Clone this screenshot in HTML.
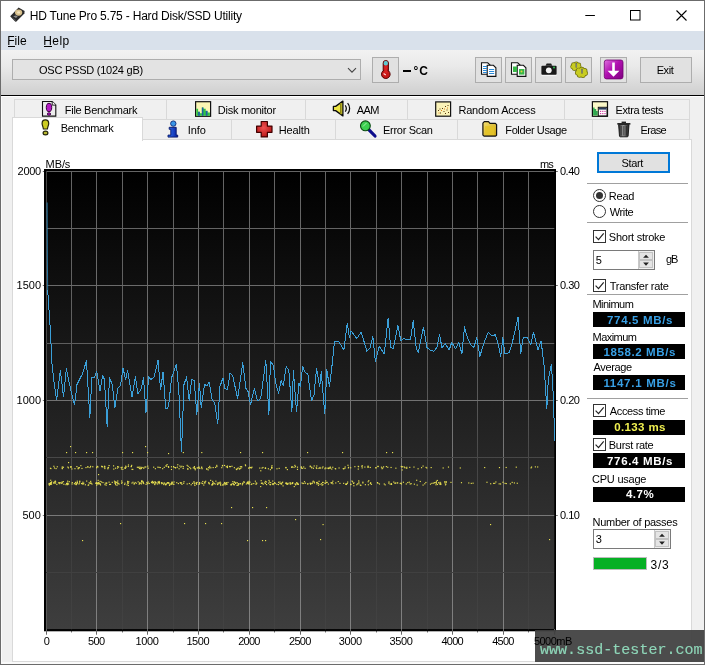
<!DOCTYPE html>
<html><head><meta charset="utf-8"><title>HD Tune Pro</title>
<style>
*{box-sizing:border-box;margin:0;padding:0}
html,body{width:705px;height:665px;overflow:hidden;background:#f0f0f0;font-family:"Liberation Sans",sans-serif}
#w{position:absolute;left:0;top:0;width:705px;height:665px;overflow:hidden;background:#f0f0f0}
.a{position:absolute}
.t{position:absolute;white-space:pre;line-height:1;display:block}
.tab{position:absolute;background:#f0f0f0;border:1px solid #d9d9d9}
.btn{position:absolute;background:#e1e1e1;border:1px solid #adadad}
.vb{position:absolute;background:#000;left:593px;width:92px;height:15px}
.sep{position:absolute;left:587px;width:101px;height:1px;background:#a0a0a0}
.cb{position:absolute;left:593px;width:13px;height:13px;border:1px solid #333;background:#fff}
.spin{position:absolute;background:#fff;border:1px solid #7a7a7a}
</style></head><body><div id="w">

<!-- title bar -->
<div class="a" style="left:0;top:0;width:705px;height:31px;background:#fff"></div>
<!-- menu bar -->
<div class="a" style="left:0;top:31px;width:705px;height:19px;background:#d9e1eb"></div>
<!-- toolbar gradient -->
<div class="a" style="left:0;top:50px;width:705px;height:45px;background:linear-gradient(#f2f2f2,#eaeaea 35%,#cfcfcf)"></div>
<div class="a" style="left:0;top:95px;width:705px;height:1px;background:#000"></div>
<div class="a" style="left:0;top:96px;width:705px;height:1px;background:#fff"></div>

<!-- window controls -->
<svg class="a" style="left:570px;top:0" width="135" height="31" viewBox="0 0 135 31">
<path d="M15.3 15.5h9.6" stroke="#000" stroke-width="1" fill="none"/>
<rect x="60.5" y="10.5" width="9.5" height="9.500" stroke="#000" stroke-width="1" fill="none"/>
<path d="M106.5 10.5l10 10M116.5 10.5l-10 10" stroke="#000" stroke-width="1.1" fill="none"/>
</svg>

<!-- app icon -->
<svg class="a" style="left:9px;top:6px" width="18" height="18" viewBox="0 0 18 18">
<path d="M1.2 10.2 L9.6 1.6 L15.6 5 L15.4 7.4 L7.4 15.6 L6.2 15.6 Z" fill="#2a2a2a"/>
<path d="M1.2 10.2 L6.2 13.6 L7.4 15.6 L6.2 15.6 Z" fill="#555"/>
<ellipse cx="9.6" cy="6.6" rx="3.6" ry="3.1" fill="#d8c08c"/>
<ellipse cx="9.6" cy="6.4" rx="1.5" ry="1.2" fill="#f3e4bd"/>
<path d="M4.2 10.2 L7 12 L8.8 10.4 L6.8 9.4 Z" fill="#8a8a8a"/>
</svg>

<!-- combobox -->
<div class="a" style="left:12px;top:59px;width:349px;height:21px;background:#e3e3e3;border:1px solid #adadad"></div>
<svg class="a" style="left:345px;top:65px" width="14" height="10" viewBox="0 0 14 10"><path d="M3 3.2l4 4 4-4" stroke="#444" stroke-width="1.1" fill="none"/></svg>

<!-- toolbar buttons -->
<div class="btn" style="left:372px;top:57px;width:27px;height:26px"></div>
<div class="btn" style="left:475px;top:57px;width:27px;height:26px"></div>
<div class="btn" style="left:505px;top:57px;width:27px;height:26px"></div>
<div class="btn" style="left:535px;top:57px;width:27px;height:26px"></div>
<div class="btn" style="left:565px;top:57px;width:27px;height:26px"></div>
<div class="btn" style="left:600px;top:57px;width:27px;height:26px"></div>
<div class="btn" style="left:640px;top:57px;width:52px;height:26px"></div>
<!--TBICONS-->

<!-- tab strip -->
<div class="tab" style="left:14px;top:99px;width:153px;height:21px"></div>
<div class="tab" style="left:166px;top:99px;width:140px;height:21px"></div>
<div class="tab" style="left:305px;top:99px;width:103px;height:21px"></div>
<div class="tab" style="left:407px;top:99px;width:158px;height:21px"></div>
<div class="tab" style="left:564px;top:99px;width:126px;height:21px"></div>

<div class="tab" style="left:141px;top:119px;width:91px;height:21px"></div>
<div class="tab" style="left:231px;top:119px;width:105px;height:21px"></div>
<div class="tab" style="left:335px;top:119px;width:123px;height:21px"></div>
<div class="tab" style="left:457px;top:119px;width:136px;height:21px"></div>
<div class="tab" style="left:592px;top:119px;width:98px;height:21px"></div>

<!-- tab page -->
<div class="a" style="left:12px;top:139px;width:680px;height:523px;background:#fff;border:1px solid #d9d9d9"></div>
<!-- selected tab -->
<div class="a" style="left:12px;top:117px;width:131px;height:24px;background:#fff;border:1px solid #d9d9d9;border-bottom:none"></div>
<!--ICONS_START--><svg class="a" style="left:0;top:0;pointer-events:none" width="705" height="665" viewBox="0 0 705 665">
<defs>
<linearGradient id="gPur" x1="0" y1="0" x2="1" y2="1"><stop offset="0" stop-color="#e070e0"/><stop offset=".45" stop-color="#b010b0"/><stop offset="1" stop-color="#800080"/></linearGradient>
<linearGradient id="gCan" x1="0" y1="0" x2="1" y2="0"><stop offset="0" stop-color="#222"/><stop offset=".45" stop-color="#9a9a9a"/><stop offset=".7" stop-color="#555"/><stop offset="1" stop-color="#1a1a1a"/></linearGradient>
<linearGradient id="gFol" x1="0" y1="0" x2="1" y2="1"><stop offset="0" stop-color="#f4e070"/><stop offset="1" stop-color="#c8a010"/></linearGradient>
<radialGradient id="gRed" cx=".45" cy=".4" r=".7"><stop offset="0" stop-color="#f05050"/><stop offset="1" stop-color="#b01010"/></radialGradient>
<linearGradient id="gBlu" x1="0" y1="0" x2="1" y2="0"><stop offset="0" stop-color="#3070f0"/><stop offset="1" stop-color="#0820a0"/></linearGradient>
</defs>

<!-- thermometer -->
<g>
<rect x="383.2" y="60.6" width="5.2" height="12" rx="2.4" fill="#c81818" stroke="#500" stroke-width="1"/>
<rect x="383.7" y="61.1" width="4.2" height="4.4" rx="1.8" fill="#5cc8d0"/>
<circle cx="385.8" cy="74.2" r="4.3" fill="#c81818" stroke="#500" stroke-width="1"/>
<rect x="384.2" y="66" width="3.2" height="7" fill="#d82020"/>
<path d="M383.6 73.4l2.2 1.6" stroke="#ffd0d0" stroke-width="1.2"/>
</g>

<!-- copy text icon -->
<g stroke="#111" stroke-width="1.1">
<path d="M481.5 62.8h6.2l2.3 2.3v9.2h-8.5z" fill="#fff"/>
<path d="M487.2 65.3h6.2l2.5 2.5v8.6h-8.7z" fill="#fff"/>
</g>
<g stroke="#2a8ad8" stroke-width="1">
<path d="M483 66.5h4M483 68.5h4M483 70.5h4M483 72.5h4"/>
<path d="M489 69.5h5.2M489 71.5h5.2M489 73.5h5.2"/>
</g>
<!-- copy image icon -->
<g stroke="#111" stroke-width="1.1">
<path d="M511.5 62.8h6.2l2.3 2.3v9.2h-8.5z" fill="#fff"/>
<path d="M517.2 65.3h6.2l2.5 2.5v8.6h-8.7z" fill="#fff"/>
</g>
<rect x="513" y="66.5" width="4" height="5.5" fill="#38b848"/>
<rect x="519" y="69" width="5.4" height="5.6" fill="#38b848"/>
<circle cx="521.5" cy="71.5" r="1" fill="#e8d040"/>
<!-- camera -->
<g>
<rect x="541.4" y="65.8" width="15.2" height="9" rx="1" fill="#1a1a1a"/>
<path d="M545.5 65.8l1.2-2.4h4.4l1.2 2.4z" fill="#1a1a1a"/>
<circle cx="548.8" cy="70.3" r="2.9" fill="#f4f4f4"/>
<circle cx="554" cy="67.6" r="1" fill="#30c050"/>
<path d="M541.4 75.6h15.2" stroke="#f8f8f8" stroke-width="1"/>
</g>
<!-- yellow gizmo -->
<g fill="#6e7010"><circle cx="579.16" cy="67.14" r="2.45"/><circle cx="577.21" cy="68.75" r="2.45"/><circle cx="574.34" cy="68.58" r="2.45"/><circle cx="572.72" cy="66.77" r="2.45"/><circle cx="573.57" cy="64.68" r="2.45"/><circle cx="576.25" cy="63.89" r="2.45"/><circle cx="578.74" cy="64.98" r="2.45"/><ellipse cx="576.0" cy="66.4" rx="4.38" ry="3.50"/></g><g fill="#c8cc22"><circle cx="579.16" cy="67.14" r="1.75"/><circle cx="577.21" cy="68.75" r="1.75"/><circle cx="574.34" cy="68.58" r="1.75"/><circle cx="572.72" cy="66.77" r="1.75"/><circle cx="573.57" cy="64.68" r="1.75"/><circle cx="576.25" cy="63.89" r="1.75"/><circle cx="578.74" cy="64.98" r="1.75"/><ellipse cx="576.0" cy="66.4" rx="3.68" ry="2.80"/></g>
<g fill="#6e7010"><circle cx="585.15" cy="73.27" r="2.75"/><circle cx="582.89" cy="75.15" r="2.75"/><circle cx="579.59" cy="74.96" r="2.75"/><circle cx="577.73" cy="72.84" r="2.75"/><circle cx="578.70" cy="70.39" r="2.75"/><circle cx="581.79" cy="69.46" r="2.75"/><circle cx="584.65" cy="70.74" r="2.75"/><ellipse cx="581.5" cy="72.4" rx="4.94" ry="3.98"/></g><g fill="#c8cc22"><circle cx="585.15" cy="73.27" r="2.05"/><circle cx="582.89" cy="75.15" r="2.05"/><circle cx="579.59" cy="74.96" r="2.05"/><circle cx="577.73" cy="72.84" r="2.05"/><circle cx="578.70" cy="70.39" r="2.05"/><circle cx="581.79" cy="69.46" r="2.05"/><circle cx="584.65" cy="70.74" r="2.05"/><ellipse cx="581.5" cy="72.4" rx="4.24" ry="3.28"/></g>
<path d="M576.300 63v4.600M582 68.800v4.800" stroke="#55584a" stroke-width="1.500" fill="none"/><path d="M576.300 63.500v3.600M582 69.300v3.800" stroke="#b8bcb0" stroke-width=".5" fill="none"/>
<!-- purple download -->
<rect x="604.300" y="60" width="18.700" height="18.900" rx="2.200" fill="url(#gPur)" stroke="#700070" stroke-width=".8"/>
<path d="M612.200 62.500h2.600v8.200h4.600l-5.900 6-5.900-6h4.600z" fill="#fff"/>

<!-- File Benchmark icon -->
<path d="M42.500 101.500h9.700l3.600 3.600v11h-13.300z" fill="#ececec" stroke="#111" stroke-width="1.100"/>
<path d="M52.200 101.500v3.600h3.600" fill="#fff" stroke="#111" stroke-width=".9"/>
<ellipse cx="49" cy="107.500" rx="2.700" ry="4.200" fill="#b41cc4" stroke="#3a0040" stroke-width="1"/>
<ellipse cx="49" cy="114" rx="1.700" ry="1.200" fill="#b41cc4" stroke="#3a0040" stroke-width=".9"/>
<!-- Benchmark icon -->
<path d="M45.400 119.800c2.200 0 3.300 1.500 3.300 3.600 0 1.800-1 3.200-1.300 5.600h-4c-.3-2.400-1.300-3.800-1.300-5.600 0-2.100 1.100-3.600 3.300-3.600z" fill="#cccc20" stroke="#26260a" stroke-width="1.200"/>
<ellipse cx="45.500" cy="133" rx="2.400" ry="1.900" fill="#b8b830" stroke="#26260a" stroke-width="1.200"/>

<!-- Disk monitor icon -->
<rect x="195.600" y="101.700" width="15" height="14.600" fill="#fbf6b4" stroke="#111" stroke-width="1.200"/>
<path d="M196.300 115.700v-7h1.800v3h1.700v1.500h2v-5.800h1.600v1.300h2.300v2.200h1.800v1.600h2.400v3.200z" fill="#30c444"/>
<path d="M198.100 115.700v-4h1.700v4zM201.900 115.700v-8.300h1.500v8.300zM205.800 115.700v-5h1.700v5z" fill="#1f5fa4"/>
<!-- Info icon -->
<circle cx="173.300" cy="123.600" r="2.700" fill="#3a96e8" stroke="#0c2a78" stroke-width=".9"/>
<path d="M169.200 127.300h7v7.800h1.500v2h-9.700v-2h2.800v-5.800h-1.600z" fill="url(#gBlu)" stroke="#061466" stroke-width=".9"/>
<!-- Health icon -->
<path d="M261.200 121.500h6.200v4.600h4.600v6.200h-4.600v4.600h-6.200v-4.600h-4.600v-6.200h4.600z" fill="url(#gRed)" stroke="#400000" stroke-width="1.200" stroke-linejoin="round"/>
<!-- AAM icon -->
<path d="M333.400 106.400h2.200l7.300-5.300v14.800l-7.300-5.300h-2.200z" fill="#ece444" stroke="#0a0a0a" stroke-width="1.300" stroke-linejoin="round"/>
<path d="M340.800 103v11.200" stroke="#8c8610" stroke-width="1.600"/>
<path d="M345.200 105.300c1.500 1.700 1.500 4.700 0 6.400M347.600 103.200c2.700 3 2.700 7.600 0 10.600" fill="none" stroke="#0a0a0a" stroke-width="1.250"/>
<!-- Error scan icon -->
<path d="M369 129.800l6 6.200" stroke="#0c0c8c" stroke-width="3.200" stroke-linecap="round"/>
<circle cx="365.400" cy="125.800" r="4.900" fill="#3cd050" stroke="#0a4a10" stroke-width="1.100"/>
<path d="M363 126.500l3.600-3.600" stroke="#a0f0a8" stroke-width="1"/>
<!-- Random access icon -->
<rect x="435.700" y="101.900" width="14.900" height="14.300" fill="#fbf3b8" stroke="#111" stroke-width="1.200"/>
<g fill="#5a3a10"><rect x="438" y="110" width="1" height="1"/><rect x="440" y="112.500" width="1" height="1"/><rect x="442" y="108" width="1" height="1"/><rect x="443.500" y="111" width="1" height="1"/><rect x="445" y="106" width="1" height="1"/><rect x="446.500" y="109.500" width="1" height="1"/><rect x="447.500" y="105" width="1" height="1"/><rect x="445" y="113" width="1" height="1"/><rect x="439.500" y="108.500" width="1" height="1"/><rect x="448" y="112" width="1" height="1"/></g>
<g fill="#e08020"><rect x="441" y="110" width="1" height="1"/><rect x="444" y="108.500" width="1" height="1"/><rect x="438.500" y="112.500" width="1" height="1"/><rect x="447" y="107.500" width="1" height="1"/></g>
<!-- Folder icon -->
<path d="M482.900 123.200l1.400-1.500h4.200l1.500 1.700h5.400l1.200 1.200v10.600l-1 .9h-11.600l-1.100-1z" fill="url(#gFol)" stroke="#111" stroke-width="1.200" stroke-linejoin="round"/>
<path d="M485 126.200h9.500v8.800h-9.500z" fill="#e4c428" opacity=".9"/>
<!-- Extra tests icon -->
<rect x="592.400" y="101.700" width="15.100" height="14.600" fill="#fbf8c8" stroke="#111" stroke-width="1.200"/>
<path d="M593.100 115.600v-8l1.500 0v1.500h1.600v1.800h1.500v4.700z" fill="#30a850"/>
<rect x="598.300" y="107.300" width="8.700" height="8.600" fill="#fff" stroke="#111" stroke-width="1"/>
<rect x="598.800" y="107.800" width="7.700" height="1.800" fill="#2a3a5a"/>
<g fill="#d040a0"><rect x="600" y="110.800" width="1.200" height="1.200"/><rect x="602.200" y="110.800" width="1.200" height="1.200"/><rect x="604.400" y="110.800" width="1.200" height="1.200"/><rect x="600" y="113" width="1.200" height="1.200"/><rect x="602.200" y="113" width="1.200" height="1.200"/><rect x="604.400" y="113" width="1.200" height="1.200"/></g>
<!-- Erase icon -->
<path d="M618.600 124.500h10.400l-.9 11.600c0 .5-.4.700-.9.700h-6.800c-.5 0-.9-.2-.9-.7z" fill="url(#gCan)" stroke="#111" stroke-width=".9"/>
<path d="M617.300 123h13.100v1.700h-13.100z" fill="#2a2a2a"/>
<path d="M621.600 121.600h4.400v1.400h-4.400z" fill="#222"/>
<path d="M621.200 126v9.500M623.800 126v9.500M626.400 126v9.500" stroke="#222" stroke-width=".7"/>
</svg>
<!--ICONS_END-->

<!-- right panel -->
<div class="a" style="left:597px;top:152px;width:73px;height:21px;background:#e1e1e1;border:2px solid #0078d7"></div>
<div class="sep" style="top:183px"></div>
<div class="a" style="left:593px;top:189px;width:13px;height:13px;border:1px solid #333;border-radius:50%;background:#fff"></div>
<div class="a" style="left:596px;top:192px;width:7px;height:7px;border-radius:50%;background:#333"></div>
<div class="a" style="left:593px;top:205px;width:13px;height:13px;border:1px solid #333;border-radius:50%;background:#fff"></div>
<div class="sep" style="top:222px"></div>
<div class="cb" style="top:230px"></div>
<div class="spin" style="left:593px;top:250px;width:62px;height:20px"></div>
<div class="a" style="left:638px;top:251px;width:16px;height:18px;background:#f0f0f0;border-left:1px solid #c8c8c8"></div>
<div class="a" style="left:639px;top:252px;width:14px;height:8px;background:#e4e4e4;border:1px solid #c2c2c2"></div>
<div class="a" style="left:639px;top:260px;width:14px;height:8px;background:#e4e4e4;border:1px solid #c2c2c2"></div>
<div class="cb" style="top:279px"></div>
<div class="sep" style="top:294px"></div>
<div class="vb" style="top:312px"></div>
<div class="vb" style="top:344px"></div>
<div class="vb" style="top:375px"></div>
<div class="sep" style="top:398px"></div>
<div class="cb" style="top:404px"></div>
<div class="vb" style="top:420px"></div>
<div class="cb" style="top:438px"></div>
<div class="vb" style="top:453px"></div>
<div class="vb" style="top:487px"></div>
<div class="spin" style="left:593px;top:529px;width:78px;height:20px"></div>
<div class="a" style="left:654px;top:530px;width:16px;height:18px;background:#f0f0f0;border-left:1px solid #c8c8c8"></div>
<div class="a" style="left:655px;top:531px;width:14px;height:8px;background:#e4e4e4;border:1px solid #c2c2c2"></div>
<div class="a" style="left:655px;top:539px;width:14px;height:8px;background:#e4e4e4;border:1px solid #c2c2c2"></div>
<div class="a" style="left:593px;top:557px;width:54px;height:13px;background:#06b025;border:1px solid #bcbcbc"></div>
<svg class="a" style="left:0;top:0;pointer-events:none" width="705" height="665" viewBox="0 0 705 665">
<g fill="none" stroke="#222" stroke-width="1.2">
<path d="M595.6 236.6l2.9 3 5.2-6.3"/>
<path d="M595.6 285.6l2.9 3 5.2-6.3"/>
<path d="M595.6 410.6l2.9 3 5.2-6.3"/>
<path d="M595.6 444.6l2.9 3 5.2-6.3"/>
</g>
<g fill="#222">
<path d="M643.100 257.800l2.900-3.100 2.900 3.100z"/><path d="M643.100 262.600l2.900 3.100 2.900-3.100z"/>
<path d="M659.100 536.800l2.900-3.100 2.900 3.100z"/><path d="M659.100 541.600l2.900 3.100 2.900-3.100z"/>
</g>
</svg>

<svg id="chart" width="705" height="665" viewBox="0 0 705 665" style="position:absolute;left:0;top:0"><defs><linearGradient id="bg" x1="0" y1="0" x2="0" y2="1"><stop offset="0" stop-color="#000"/><stop offset="1" stop-color="#3e3e3e"/></linearGradient><linearGradient id="mj" gradientUnits="userSpaceOnUse" x1="0" y1="171" x2="0" y2="630"><stop offset="0" stop-color="#646464"/><stop offset="1" stop-color="#808080"/></linearGradient><linearGradient id="mn" gradientUnits="userSpaceOnUse" x1="0" y1="171" x2="0" y2="630"><stop offset="0" stop-color="#646464"/><stop offset="0.35" stop-color="#606060"/><stop offset="0.5" stop-color="#575757"/><stop offset="0.61" stop-color="#4a4a4a"/><stop offset="0.78" stop-color="#3d3d3d"/><stop offset="1" stop-color="#424242"/></linearGradient></defs><rect x="44" y="169" width="512" height="462" fill="#000"/><rect x="46" y="171" width="509" height="458.5" fill="url(#bg)"/><line x1="46.50" y1="171" x2="46.50" y2="634.5" stroke="url(#mj)" stroke-width="1"/><line x1="71.50" y1="171" x2="71.50" y2="629.5" stroke="url(#mn)" stroke-width="1"/><line x1="71.50" y1="629" x2="71.50" y2="632.5" stroke="#777" stroke-width="1"/><line x1="96.50" y1="171" x2="96.50" y2="634.5" stroke="url(#mj)" stroke-width="1"/><line x1="122.50" y1="171" x2="122.50" y2="629.5" stroke="url(#mn)" stroke-width="1"/><line x1="122.50" y1="629" x2="122.50" y2="632.5" stroke="#777" stroke-width="1"/><line x1="147.50" y1="171" x2="147.50" y2="634.5" stroke="url(#mj)" stroke-width="1"/><line x1="173.50" y1="171" x2="173.50" y2="629.5" stroke="url(#mn)" stroke-width="1"/><line x1="173.50" y1="629" x2="173.50" y2="632.5" stroke="#777" stroke-width="1"/><line x1="198.50" y1="171" x2="198.50" y2="634.5" stroke="url(#mj)" stroke-width="1"/><line x1="223.50" y1="171" x2="223.50" y2="629.5" stroke="url(#mn)" stroke-width="1"/><line x1="223.50" y1="629" x2="223.50" y2="632.5" stroke="#777" stroke-width="1"/><line x1="249.50" y1="171" x2="249.50" y2="634.5" stroke="url(#mj)" stroke-width="1"/><line x1="274.50" y1="171" x2="274.50" y2="629.5" stroke="url(#mn)" stroke-width="1"/><line x1="274.50" y1="629" x2="274.50" y2="632.5" stroke="#777" stroke-width="1"/><line x1="300.50" y1="171" x2="300.50" y2="634.5" stroke="url(#mj)" stroke-width="1"/><line x1="325.50" y1="171" x2="325.50" y2="629.5" stroke="url(#mn)" stroke-width="1"/><line x1="325.50" y1="629" x2="325.50" y2="632.5" stroke="#777" stroke-width="1"/><line x1="350.50" y1="171" x2="350.50" y2="634.5" stroke="url(#mj)" stroke-width="1"/><line x1="376.50" y1="171" x2="376.50" y2="629.5" stroke="url(#mn)" stroke-width="1"/><line x1="376.50" y1="629" x2="376.50" y2="632.5" stroke="#777" stroke-width="1"/><line x1="401.50" y1="171" x2="401.50" y2="634.5" stroke="url(#mj)" stroke-width="1"/><line x1="427.50" y1="171" x2="427.50" y2="629.5" stroke="url(#mn)" stroke-width="1"/><line x1="427.50" y1="629" x2="427.50" y2="632.5" stroke="#777" stroke-width="1"/><line x1="452.50" y1="171" x2="452.50" y2="634.5" stroke="url(#mj)" stroke-width="1"/><line x1="477.50" y1="171" x2="477.50" y2="629.5" stroke="url(#mn)" stroke-width="1"/><line x1="477.50" y1="629" x2="477.50" y2="632.5" stroke="#777" stroke-width="1"/><line x1="503.50" y1="171" x2="503.50" y2="634.5" stroke="url(#mj)" stroke-width="1"/><line x1="528.50" y1="171" x2="528.50" y2="629.5" stroke="url(#mn)" stroke-width="1"/><line x1="528.50" y1="629" x2="528.50" y2="632.5" stroke="#777" stroke-width="1"/><line x1="554.8" y1="629" x2="554.8" y2="634.5" stroke="#555" stroke-width="1"/><line x1="42.8" y1="171.50" x2="557.8" y2="171.50" stroke="#646464" stroke-width="1"/><line x1="46" y1="228.50" x2="555" y2="228.50" stroke="#646464" stroke-width="1"/><line x1="42.8" y1="285.50" x2="557.8" y2="285.50" stroke="#6b6b6b" stroke-width="1"/><line x1="46" y1="343.50" x2="555" y2="343.50" stroke="#5e5e5e" stroke-width="1"/><line x1="42.8" y1="400.50" x2="557.8" y2="400.50" stroke="#727272" stroke-width="1"/><line x1="46" y1="457.50" x2="555" y2="457.50" stroke="#484848" stroke-width="1"/><line x1="42.8" y1="515.50" x2="557.8" y2="515.50" stroke="#797979" stroke-width="1"/><line x1="46" y1="572.50" x2="555" y2="572.50" stroke="#404040" stroke-width="1"/><rect x="554.3" y="170" width="1.7" height="461" fill="#000"/><rect x="44" y="629.2" width="512" height="2.100" fill="#000"/><rect x="44" y="170" width="2.3" height="461" fill="#000"/><line x1="46.50" y1="629" x2="46.50" y2="634.5" stroke="#666" stroke-width="1"/><line x1="96.50" y1="629" x2="96.50" y2="634.5" stroke="#666" stroke-width="1"/><line x1="147.50" y1="629" x2="147.50" y2="634.5" stroke="#666" stroke-width="1"/><line x1="198.50" y1="629" x2="198.50" y2="634.5" stroke="#666" stroke-width="1"/><line x1="249.50" y1="629" x2="249.50" y2="634.5" stroke="#666" stroke-width="1"/><line x1="300.50" y1="629" x2="300.50" y2="634.5" stroke="#666" stroke-width="1"/><line x1="350.50" y1="629" x2="350.50" y2="634.5" stroke="#666" stroke-width="1"/><line x1="401.50" y1="629" x2="401.50" y2="634.5" stroke="#666" stroke-width="1"/><line x1="452.50" y1="629" x2="452.50" y2="634.5" stroke="#666" stroke-width="1"/><line x1="503.50" y1="629" x2="503.50" y2="634.5" stroke="#666" stroke-width="1"/><line x1="554.50" y1="629" x2="554.50" y2="634.5" stroke="#666" stroke-width="1"/><g fill="#e8e050"><rect x="201.2" y="482.5" width="1.15" height="1.15"/><rect x="301.5" y="482.4" width="1.15" height="1.15"/><rect x="75.4" y="483.8" width="1.15" height="1.15"/><rect x="81.0" y="483.0" width="1.15" height="1.15"/><rect x="248.8" y="483.3" width="1.15" height="1.15"/><rect x="321.0" y="483.2" width="1.15" height="1.15"/><rect x="509.8" y="483.3" width="1.15" height="1.15"/><rect x="116.2" y="482.0" width="1.15" height="1.15"/><rect x="193.9" y="483.3" width="1.15" height="1.15"/><rect x="350.2" y="484.0" width="1.15" height="1.15"/><rect x="307.1" y="483.4" width="1.15" height="1.15"/><rect x="369.8" y="483.0" width="1.15" height="1.15"/><rect x="196.6" y="481.8" width="1.15" height="1.15"/><rect x="163.5" y="483.0" width="1.15" height="1.15"/><rect x="296.4" y="482.6" width="1.15" height="1.15"/><rect x="511.6" y="481.8" width="1.15" height="1.15"/><rect x="245.8" y="483.4" width="1.15" height="1.15"/><rect x="66.5" y="483.7" width="1.15" height="1.15"/><rect x="409.6" y="483.4" width="1.15" height="1.15"/><rect x="376.9" y="482.0" width="1.15" height="1.15"/><rect x="322.3" y="484.1" width="1.15" height="1.15"/><rect x="272.2" y="480.5" width="1.15" height="1.15"/><rect x="76.7" y="480.6" width="1.15" height="1.15"/><rect x="436.8" y="479.9" width="1.15" height="1.15"/><rect x="230.5" y="483.9" width="1.15" height="1.15"/><rect x="127.5" y="482.9" width="1.15" height="1.15"/><rect x="75.9" y="483.3" width="1.15" height="1.15"/><rect x="232.9" y="483.3" width="1.15" height="1.15"/><rect x="86.1" y="480.5" width="1.15" height="1.15"/><rect x="179.7" y="482.0" width="1.15" height="1.15"/><rect x="217.7" y="483.3" width="1.15" height="1.15"/><rect x="131.4" y="482.5" width="1.15" height="1.15"/><rect x="158.4" y="482.0" width="1.15" height="1.15"/><rect x="49.9" y="482.2" width="1.15" height="1.15"/><rect x="222.7" y="484.3" width="1.15" height="1.15"/><rect x="291.8" y="482.2" width="1.15" height="1.15"/><rect x="367.8" y="484.2" width="1.15" height="1.15"/><rect x="233.6" y="481.6" width="1.15" height="1.15"/><rect x="97.0" y="483.1" width="1.15" height="1.15"/><rect x="146.7" y="482.9" width="1.15" height="1.15"/><rect x="208.8" y="483.3" width="1.15" height="1.15"/><rect x="96.0" y="482.7" width="1.15" height="1.15"/><rect x="60.1" y="482.2" width="1.15" height="1.15"/><rect x="167.3" y="482.3" width="1.15" height="1.15"/><rect x="220.2" y="484.7" width="1.15" height="1.15"/><rect x="268.4" y="479.9" width="1.15" height="1.15"/><rect x="88.6" y="482.2" width="1.15" height="1.15"/><rect x="440.0" y="483.4" width="1.15" height="1.15"/><rect x="58.9" y="482.1" width="1.15" height="1.15"/><rect x="304.9" y="482.6" width="1.15" height="1.15"/><rect x="297.8" y="483.8" width="1.15" height="1.15"/><rect x="171.5" y="481.4" width="1.15" height="1.15"/><rect x="127.0" y="480.8" width="1.15" height="1.15"/><rect x="203.9" y="482.3" width="1.15" height="1.15"/><rect x="155.2" y="482.5" width="1.15" height="1.15"/><rect x="61.2" y="482.9" width="1.15" height="1.15"/><rect x="170.6" y="483.9" width="1.15" height="1.15"/><rect x="152.3" y="482.4" width="1.15" height="1.15"/><rect x="141.0" y="481.0" width="1.15" height="1.15"/><rect x="445.5" y="481.0" width="1.15" height="1.15"/><rect x="88.1" y="484.3" width="1.15" height="1.15"/><rect x="402.8" y="481.7" width="1.15" height="1.15"/><rect x="132.4" y="481.7" width="1.15" height="1.15"/><rect x="237.9" y="484.4" width="1.15" height="1.15"/><rect x="390.8" y="483.1" width="1.15" height="1.15"/><rect x="117.1" y="483.2" width="1.15" height="1.15"/><rect x="213.7" y="482.8" width="1.15" height="1.15"/><rect x="297.1" y="482.8" width="1.15" height="1.15"/><rect x="253.2" y="483.0" width="1.15" height="1.15"/><rect x="167.1" y="482.0" width="1.15" height="1.15"/><rect x="161.8" y="482.6" width="1.15" height="1.15"/><rect x="110.0" y="483.8" width="1.15" height="1.15"/><rect x="215.3" y="480.6" width="1.15" height="1.15"/><rect x="247.0" y="481.5" width="1.15" height="1.15"/><rect x="285.3" y="482.5" width="1.15" height="1.15"/><rect x="256.2" y="482.7" width="1.15" height="1.15"/><rect x="49.9" y="483.3" width="1.15" height="1.15"/><rect x="391.0" y="483.8" width="1.15" height="1.15"/><rect x="202.2" y="480.9" width="1.15" height="1.15"/><rect x="98.2" y="482.0" width="1.15" height="1.15"/><rect x="165.5" y="482.9" width="1.15" height="1.15"/><rect x="313.7" y="481.4" width="1.15" height="1.15"/><rect x="337.7" y="481.0" width="1.15" height="1.15"/><rect x="262.0" y="482.6" width="1.15" height="1.15"/><rect x="274.1" y="482.0" width="1.15" height="1.15"/><rect x="312.7" y="480.6" width="1.15" height="1.15"/><rect x="445.3" y="483.6" width="1.15" height="1.15"/><rect x="82.3" y="483.5" width="1.15" height="1.15"/><rect x="82.6" y="483.2" width="1.15" height="1.15"/><rect x="121.1" y="480.4" width="1.15" height="1.15"/><rect x="360.3" y="484.8" width="1.15" height="1.15"/><rect x="151.9" y="480.8" width="1.15" height="1.15"/><rect x="236.4" y="484.8" width="1.15" height="1.15"/><rect x="124.4" y="482.6" width="1.15" height="1.15"/><rect x="291.9" y="483.0" width="1.15" height="1.15"/><rect x="389.6" y="483.6" width="1.15" height="1.15"/><rect x="310.1" y="483.7" width="1.15" height="1.15"/><rect x="343.1" y="482.8" width="1.15" height="1.15"/><rect x="78.4" y="483.4" width="1.15" height="1.15"/><rect x="97.6" y="479.8" width="1.15" height="1.15"/><rect x="66.7" y="482.6" width="1.15" height="1.15"/><rect x="247.7" y="483.3" width="1.15" height="1.15"/><rect x="435.4" y="484.2" width="1.15" height="1.15"/><rect x="317.9" y="484.7" width="1.15" height="1.15"/><rect x="90.3" y="482.3" width="1.15" height="1.15"/><rect x="82.3" y="481.6" width="1.15" height="1.15"/><rect x="87.6" y="484.7" width="1.15" height="1.15"/><rect x="262.6" y="483.6" width="1.15" height="1.15"/><rect x="309.6" y="482.6" width="1.15" height="1.15"/><rect x="297.2" y="483.3" width="1.15" height="1.15"/><rect x="99.8" y="483.4" width="1.15" height="1.15"/><rect x="195.6" y="482.9" width="1.15" height="1.15"/><rect x="407.2" y="482.0" width="1.15" height="1.15"/><rect x="212.1" y="482.7" width="1.15" height="1.15"/><rect x="166.5" y="482.6" width="1.15" height="1.15"/><rect x="137.6" y="481.3" width="1.15" height="1.15"/><rect x="490.1" y="483.2" width="1.15" height="1.15"/><rect x="282.1" y="481.6" width="1.15" height="1.15"/><rect x="233.9" y="481.5" width="1.15" height="1.15"/><rect x="210.1" y="479.8" width="1.15" height="1.15"/><rect x="239.4" y="483.2" width="1.15" height="1.15"/><rect x="81.5" y="482.9" width="1.15" height="1.15"/><rect x="168.9" y="484.5" width="1.15" height="1.15"/><rect x="181.4" y="483.8" width="1.15" height="1.15"/><rect x="186.6" y="483.4" width="1.15" height="1.15"/><rect x="172.5" y="483.7" width="1.15" height="1.15"/><rect x="163.6" y="482.3" width="1.15" height="1.15"/><rect x="48.5" y="483.7" width="1.15" height="1.15"/><rect x="272.5" y="483.1" width="1.15" height="1.15"/><rect x="50.3" y="483.9" width="1.15" height="1.15"/><rect x="90.5" y="482.9" width="1.15" height="1.15"/><rect x="191.9" y="482.8" width="1.15" height="1.15"/><rect x="325.0" y="482.7" width="1.15" height="1.15"/><rect x="232.2" y="481.1" width="1.15" height="1.15"/><rect x="513.8" y="482.4" width="1.15" height="1.15"/><rect x="68.7" y="481.1" width="1.15" height="1.15"/><rect x="113.9" y="480.6" width="1.15" height="1.15"/><rect x="324.3" y="482.6" width="1.15" height="1.15"/><rect x="156.8" y="483.4" width="1.15" height="1.15"/><rect x="97.6" y="483.5" width="1.15" height="1.15"/><rect x="312.2" y="481.5" width="1.15" height="1.15"/><rect x="279.4" y="481.5" width="1.15" height="1.15"/><rect x="285.9" y="482.5" width="1.15" height="1.15"/><rect x="396.5" y="482.4" width="1.15" height="1.15"/><rect x="83.2" y="482.6" width="1.15" height="1.15"/><rect x="281.6" y="482.0" width="1.15" height="1.15"/><rect x="274.6" y="482.9" width="1.15" height="1.15"/><rect x="352.0" y="481.2" width="1.15" height="1.15"/><rect x="117.7" y="482.7" width="1.15" height="1.15"/><rect x="316.6" y="481.8" width="1.15" height="1.15"/><rect x="76.7" y="481.9" width="1.15" height="1.15"/><rect x="367.6" y="481.2" width="1.15" height="1.15"/><rect x="292.3" y="482.2" width="1.15" height="1.15"/><rect x="470.7" y="482.8" width="1.15" height="1.15"/><rect x="56.3" y="483.9" width="1.15" height="1.15"/><rect x="260.6" y="480.1" width="1.15" height="1.15"/><rect x="147.3" y="483.1" width="1.15" height="1.15"/><rect x="115.0" y="484.1" width="1.15" height="1.15"/><rect x="498.6" y="483.3" width="1.15" height="1.15"/><rect x="157.4" y="481.5" width="1.15" height="1.15"/><rect x="277.9" y="484.0" width="1.15" height="1.15"/><rect x="261.2" y="482.7" width="1.15" height="1.15"/><rect x="114.6" y="481.9" width="1.15" height="1.15"/><rect x="48.8" y="484.6" width="1.15" height="1.15"/><rect x="444.9" y="484.3" width="1.15" height="1.15"/><rect x="224.1" y="481.9" width="1.15" height="1.15"/><rect x="218.6" y="482.6" width="1.15" height="1.15"/><rect x="96.1" y="483.0" width="1.15" height="1.15"/><rect x="183.1" y="482.7" width="1.15" height="1.15"/><rect x="289.7" y="483.6" width="1.15" height="1.15"/><rect x="224.6" y="484.2" width="1.15" height="1.15"/><rect x="388.4" y="481.4" width="1.15" height="1.15"/><rect x="394.4" y="482.7" width="1.15" height="1.15"/><rect x="183.4" y="481.1" width="1.15" height="1.15"/><rect x="486.4" y="481.7" width="1.15" height="1.15"/><rect x="188.8" y="482.9" width="1.15" height="1.15"/><rect x="358.3" y="481.7" width="1.15" height="1.15"/><rect x="127.1" y="482.3" width="1.15" height="1.15"/><rect x="146.3" y="481.9" width="1.15" height="1.15"/><rect x="260.8" y="482.7" width="1.15" height="1.15"/><rect x="139.0" y="482.4" width="1.15" height="1.15"/><rect x="161.1" y="483.1" width="1.15" height="1.15"/><rect x="317.4" y="482.7" width="1.15" height="1.15"/><rect x="243.8" y="481.6" width="1.15" height="1.15"/><rect x="226.3" y="483.5" width="1.15" height="1.15"/><rect x="505.7" y="483.0" width="1.15" height="1.15"/><rect x="286.1" y="483.2" width="1.15" height="1.15"/><rect x="176.2" y="482.1" width="1.15" height="1.15"/><rect x="237.1" y="484.7" width="1.15" height="1.15"/><rect x="460.9" y="482.1" width="1.15" height="1.15"/><rect x="63.3" y="483.7" width="1.15" height="1.15"/><rect x="325.7" y="481.9" width="1.15" height="1.15"/><rect x="233.2" y="483.7" width="1.15" height="1.15"/><rect x="99.6" y="480.8" width="1.15" height="1.15"/><rect x="295.1" y="484.3" width="1.15" height="1.15"/><rect x="264.3" y="482.1" width="1.15" height="1.15"/><rect x="66.7" y="483.0" width="1.15" height="1.15"/><rect x="353.3" y="485.2" width="1.15" height="1.15"/><rect x="108.5" y="481.6" width="1.15" height="1.15"/><rect x="101.0" y="481.4" width="1.15" height="1.15"/><rect x="296.1" y="482.1" width="1.15" height="1.15"/><rect x="332.3" y="483.2" width="1.15" height="1.15"/><rect x="190.6" y="484.2" width="1.15" height="1.15"/><rect x="159.0" y="482.3" width="1.15" height="1.15"/><rect x="193.4" y="481.1" width="1.15" height="1.15"/><rect x="246.7" y="482.7" width="1.15" height="1.15"/><rect x="155.3" y="482.1" width="1.15" height="1.15"/><rect x="370.9" y="483.7" width="1.15" height="1.15"/><rect x="286.8" y="483.6" width="1.15" height="1.15"/><rect x="435.9" y="482.5" width="1.15" height="1.15"/><rect x="152.7" y="481.9" width="1.15" height="1.15"/><rect x="282.5" y="485.3" width="1.15" height="1.15"/><rect x="153.6" y="481.3" width="1.15" height="1.15"/><rect x="117.2" y="480.4" width="1.15" height="1.15"/><rect x="148.7" y="482.9" width="1.15" height="1.15"/><rect x="76.4" y="483.0" width="1.15" height="1.15"/><rect x="135.7" y="482.7" width="1.15" height="1.15"/><rect x="362.3" y="482.4" width="1.15" height="1.15"/><rect x="224.8" y="482.7" width="1.15" height="1.15"/><rect x="180.3" y="482.8" width="1.15" height="1.15"/><rect x="500.0" y="483.4" width="1.15" height="1.15"/><rect x="216.7" y="482.5" width="1.15" height="1.15"/><rect x="436.8" y="483.9" width="1.15" height="1.15"/><rect x="224.3" y="483.1" width="1.15" height="1.15"/><rect x="139.3" y="482.9" width="1.15" height="1.15"/><rect x="242.3" y="482.5" width="1.15" height="1.15"/><rect x="410.6" y="483.1" width="1.15" height="1.15"/><rect x="208.4" y="482.8" width="1.15" height="1.15"/><rect x="172.0" y="482.3" width="1.15" height="1.15"/><rect x="49.8" y="483.5" width="1.15" height="1.15"/><rect x="494.2" y="482.8" width="1.15" height="1.15"/><rect x="230.8" y="483.9" width="1.15" height="1.15"/><rect x="251.4" y="483.3" width="1.15" height="1.15"/><rect x="335.2" y="482.4" width="1.15" height="1.15"/><rect x="199.1" y="482.8" width="1.15" height="1.15"/><rect x="141.3" y="482.3" width="1.15" height="1.15"/><rect x="165.0" y="484.1" width="1.15" height="1.15"/><rect x="202.1" y="483.0" width="1.15" height="1.15"/><rect x="173.3" y="483.8" width="1.15" height="1.15"/><rect x="383.7" y="483.4" width="1.15" height="1.15"/><rect x="158.8" y="481.5" width="1.15" height="1.15"/><rect x="362.3" y="481.6" width="1.15" height="1.15"/><rect x="445.7" y="481.7" width="1.15" height="1.15"/><rect x="397.1" y="482.3" width="1.15" height="1.15"/><rect x="165.0" y="484.0" width="1.15" height="1.15"/><rect x="321.5" y="484.6" width="1.15" height="1.15"/><rect x="235.3" y="481.9" width="1.15" height="1.15"/><rect x="516.7" y="482.7" width="1.15" height="1.15"/><rect x="272.6" y="484.0" width="1.15" height="1.15"/><rect x="67.1" y="480.6" width="1.15" height="1.15"/><rect x="104.4" y="484.1" width="1.15" height="1.15"/><rect x="171.0" y="482.5" width="1.15" height="1.15"/><rect x="495.3" y="481.4" width="1.15" height="1.15"/><rect x="150.9" y="481.8" width="1.15" height="1.15"/><rect x="114.9" y="482.7" width="1.15" height="1.15"/><rect x="356.2" y="484.2" width="1.15" height="1.15"/><rect x="53.4" y="482.4" width="1.15" height="1.15"/><rect x="195.7" y="482.1" width="1.15" height="1.15"/><rect x="424.2" y="483.2" width="1.15" height="1.15"/><rect x="235.0" y="482.9" width="1.15" height="1.15"/><rect x="350.3" y="483.6" width="1.15" height="1.15"/><rect x="241.8" y="484.2" width="1.15" height="1.15"/><rect x="193.5" y="482.2" width="1.15" height="1.15"/><rect x="216.9" y="484.0" width="1.15" height="1.15"/><rect x="220.1" y="482.6" width="1.15" height="1.15"/><rect x="50.8" y="482.0" width="1.15" height="1.15"/><rect x="248.4" y="480.8" width="1.15" height="1.15"/><rect x="266.0" y="484.0" width="1.15" height="1.15"/><rect x="55.0" y="481.2" width="1.15" height="1.15"/><rect x="90.1" y="480.8" width="1.15" height="1.15"/><rect x="223.4" y="483.2" width="1.15" height="1.15"/><rect x="294.5" y="483.4" width="1.15" height="1.15"/><rect x="99.5" y="483.7" width="1.15" height="1.15"/><rect x="141.3" y="480.0" width="1.15" height="1.15"/><rect x="276.3" y="483.7" width="1.15" height="1.15"/><rect x="438.0" y="482.2" width="1.15" height="1.15"/><rect x="419.7" y="480.9" width="1.15" height="1.15"/><rect x="440.2" y="483.9" width="1.15" height="1.15"/><rect x="151.2" y="481.6" width="1.15" height="1.15"/><rect x="106.2" y="482.6" width="1.15" height="1.15"/><rect x="67.4" y="482.7" width="1.15" height="1.15"/><rect x="444.5" y="482.4" width="1.15" height="1.15"/><rect x="331.6" y="482.0" width="1.15" height="1.15"/><rect x="246.7" y="482.0" width="1.15" height="1.15"/><rect x="249.4" y="481.6" width="1.15" height="1.15"/><rect x="59.1" y="483.1" width="1.15" height="1.15"/><rect x="279.5" y="482.9" width="1.15" height="1.15"/><rect x="264.8" y="480.8" width="1.15" height="1.15"/><rect x="271.8" y="483.5" width="1.15" height="1.15"/><rect x="91.4" y="483.5" width="1.15" height="1.15"/><rect x="289.3" y="482.4" width="1.15" height="1.15"/><rect x="289.9" y="482.4" width="1.15" height="1.15"/><rect x="286.4" y="483.3" width="1.15" height="1.15"/><rect x="139.6" y="482.5" width="1.15" height="1.15"/><rect x="280.7" y="483.3" width="1.15" height="1.15"/><rect x="79.0" y="482.4" width="1.15" height="1.15"/><rect x="405.7" y="483.4" width="1.15" height="1.15"/><rect x="433.8" y="482.2" width="1.15" height="1.15"/><rect x="285.5" y="482.9" width="1.15" height="1.15"/><rect x="287.3" y="483.5" width="1.15" height="1.15"/><rect x="65.4" y="484.1" width="1.15" height="1.15"/><rect x="127.8" y="484.9" width="1.15" height="1.15"/><rect x="102.4" y="482.0" width="1.15" height="1.15"/><rect x="322.4" y="481.9" width="1.15" height="1.15"/><rect x="97.5" y="481.9" width="1.15" height="1.15"/><rect x="425.3" y="481.9" width="1.15" height="1.15"/><rect x="218.4" y="482.1" width="1.15" height="1.15"/><rect x="399.7" y="482.9" width="1.15" height="1.15"/><rect x="435.8" y="480.7" width="1.15" height="1.15"/><rect x="325.1" y="480.3" width="1.15" height="1.15"/><rect x="195.9" y="483.3" width="1.15" height="1.15"/><rect x="339.4" y="482.8" width="1.15" height="1.15"/><rect x="290.5" y="483.2" width="1.15" height="1.15"/><rect x="356.9" y="483.3" width="1.15" height="1.15"/><rect x="49.2" y="483.5" width="1.15" height="1.15"/><rect x="154.1" y="483.3" width="1.15" height="1.15"/><rect x="326.6" y="481.8" width="1.15" height="1.15"/><rect x="111.7" y="481.8" width="1.15" height="1.15"/><rect x="163.2" y="484.0" width="1.15" height="1.15"/><rect x="238.1" y="483.6" width="1.15" height="1.15"/><rect x="53.4" y="481.8" width="1.15" height="1.15"/><rect x="353.4" y="482.3" width="1.15" height="1.15"/><rect x="165.5" y="484.0" width="1.15" height="1.15"/><rect x="240.0" y="483.1" width="1.15" height="1.15"/><rect x="75.6" y="484.1" width="1.15" height="1.15"/><rect x="493.1" y="482.8" width="1.15" height="1.15"/><rect x="142.4" y="481.1" width="1.15" height="1.15"/><rect x="432.7" y="482.6" width="1.15" height="1.15"/><rect x="194.3" y="484.9" width="1.15" height="1.15"/><rect x="51.0" y="483.4" width="1.15" height="1.15"/><rect x="400.5" y="482.6" width="1.15" height="1.15"/><rect x="154.9" y="481.5" width="1.15" height="1.15"/><rect x="157.9" y="481.8" width="1.15" height="1.15"/><rect x="384.6" y="484.3" width="1.15" height="1.15"/><rect x="309.9" y="483.0" width="1.15" height="1.15"/><rect x="173.5" y="481.4" width="1.15" height="1.15"/><rect x="504.5" y="482.8" width="1.15" height="1.15"/><rect x="171.2" y="482.6" width="1.15" height="1.15"/><rect x="400.9" y="483.4" width="1.15" height="1.15"/><rect x="161.1" y="482.0" width="1.15" height="1.15"/><rect x="270.1" y="482.0" width="1.15" height="1.15"/><rect x="254.8" y="480.6" width="1.15" height="1.15"/><rect x="317.8" y="483.1" width="1.15" height="1.15"/><rect x="84.8" y="484.2" width="1.15" height="1.15"/><rect x="116.4" y="484.7" width="1.15" height="1.15"/><rect x="211.1" y="484.3" width="1.15" height="1.15"/><rect x="61.6" y="482.1" width="1.15" height="1.15"/><rect x="79.1" y="481.2" width="1.15" height="1.15"/><rect x="219.9" y="483.7" width="1.15" height="1.15"/><rect x="79.2" y="480.6" width="1.15" height="1.15"/><rect x="98.7" y="482.9" width="1.15" height="1.15"/><rect x="346.7" y="482.9" width="1.15" height="1.15"/><rect x="95.2" y="482.7" width="1.15" height="1.15"/><rect x="199.0" y="482.0" width="1.15" height="1.15"/><rect x="57.9" y="482.3" width="1.15" height="1.15"/><rect x="222.1" y="484.4" width="1.15" height="1.15"/><rect x="62.7" y="481.0" width="1.15" height="1.15"/><rect x="212.0" y="483.4" width="1.15" height="1.15"/><rect x="302.4" y="483.0" width="1.15" height="1.15"/><rect x="435.8" y="482.3" width="1.15" height="1.15"/><rect x="48.6" y="482.9" width="1.15" height="1.15"/><rect x="50.1" y="479.7" width="1.15" height="1.15"/><rect x="280.5" y="483.2" width="1.15" height="1.15"/><rect x="212.2" y="483.9" width="1.15" height="1.15"/><rect x="171.3" y="482.5" width="1.15" height="1.15"/><rect x="378.9" y="483.4" width="1.15" height="1.15"/><rect x="100.0" y="484.4" width="1.15" height="1.15"/><rect x="345.0" y="483.6" width="1.15" height="1.15"/><rect x="237.8" y="483.1" width="1.15" height="1.15"/><rect x="468.2" y="482.4" width="1.15" height="1.15"/><rect x="145.5" y="483.8" width="1.15" height="1.15"/><rect x="227.4" y="481.9" width="1.15" height="1.15"/><rect x="158.5" y="480.9" width="1.15" height="1.15"/><rect x="212.8" y="482.3" width="1.15" height="1.15"/><rect x="121.5" y="481.8" width="1.15" height="1.15"/><rect x="128.2" y="481.2" width="1.15" height="1.15"/><rect x="413.8" y="483.6" width="1.15" height="1.15"/><rect x="138.6" y="483.6" width="1.15" height="1.15"/><rect x="121.1" y="482.7" width="1.15" height="1.15"/><rect x="295.0" y="483.7" width="1.15" height="1.15"/><rect x="203.2" y="484.5" width="1.15" height="1.15"/><rect x="96.2" y="482.4" width="1.15" height="1.15"/><rect x="96.1" y="484.6" width="1.15" height="1.15"/><rect x="394.8" y="482.5" width="1.15" height="1.15"/><rect x="140.8" y="483.3" width="1.15" height="1.15"/><rect x="231.7" y="483.2" width="1.15" height="1.15"/><rect x="236.7" y="482.2" width="1.15" height="1.15"/><rect x="347.1" y="481.5" width="1.15" height="1.15"/><rect x="115.1" y="481.2" width="1.15" height="1.15"/><rect x="319.5" y="483.7" width="1.15" height="1.15"/><rect x="247.2" y="482.3" width="1.15" height="1.15"/><rect x="351.4" y="480.5" width="1.15" height="1.15"/><rect x="196.1" y="483.6" width="1.15" height="1.15"/><rect x="345.8" y="483.4" width="1.15" height="1.15"/><rect x="248.4" y="481.9" width="1.15" height="1.15"/><rect x="134.6" y="481.9" width="1.15" height="1.15"/><rect x="416.1" y="479.7" width="1.15" height="1.15"/><rect x="66.0" y="482.9" width="1.15" height="1.15"/><rect x="124.1" y="483.9" width="1.15" height="1.15"/><rect x="95.8" y="482.2" width="1.15" height="1.15"/><rect x="303.9" y="481.1" width="1.15" height="1.15"/><rect x="440.1" y="482.6" width="1.15" height="1.15"/><rect x="242.1" y="483.1" width="1.15" height="1.15"/><rect x="233.6" y="484.3" width="1.15" height="1.15"/><rect x="105.9" y="482.5" width="1.15" height="1.15"/><rect x="177.8" y="483.0" width="1.15" height="1.15"/><rect x="54.3" y="481.2" width="1.15" height="1.15"/><rect x="214.6" y="483.5" width="1.15" height="1.15"/><rect x="154.2" y="484.0" width="1.15" height="1.15"/><rect x="151.5" y="482.2" width="1.15" height="1.15"/><rect x="233.4" y="484.0" width="1.15" height="1.15"/><rect x="269.9" y="484.1" width="1.15" height="1.15"/><rect x="154.9" y="481.8" width="1.15" height="1.15"/><rect x="269.4" y="484.0" width="1.15" height="1.15"/><rect x="307.3" y="483.2" width="1.15" height="1.15"/><rect x="450.4" y="481.8" width="1.15" height="1.15"/><rect x="225.9" y="482.1" width="1.15" height="1.15"/><rect x="49.3" y="483.0" width="1.15" height="1.15"/><rect x="181.0" y="482.3" width="1.15" height="1.15"/><rect x="250.7" y="483.9" width="1.15" height="1.15"/><rect x="359.8" y="484.6" width="1.15" height="1.15"/><rect x="75.0" y="481.8" width="1.15" height="1.15"/><rect x="114.4" y="482.6" width="1.15" height="1.15"/><rect x="53.4" y="482.6" width="1.15" height="1.15"/><rect x="358.3" y="483.2" width="1.15" height="1.15"/><rect x="158.5" y="483.1" width="1.15" height="1.15"/><rect x="211.9" y="484.3" width="1.15" height="1.15"/><rect x="127.4" y="481.6" width="1.15" height="1.15"/><rect x="141.4" y="480.9" width="1.15" height="1.15"/><rect x="255.5" y="482.4" width="1.15" height="1.15"/><rect x="310.5" y="482.8" width="1.15" height="1.15"/><rect x="281.2" y="483.3" width="1.15" height="1.15"/><rect x="268.9" y="481.4" width="1.15" height="1.15"/><rect x="303.2" y="482.8" width="1.15" height="1.15"/><rect x="51.1" y="481.3" width="1.15" height="1.15"/><rect x="225.4" y="483.0" width="1.15" height="1.15"/><rect x="502.4" y="481.7" width="1.15" height="1.15"/><rect x="61.5" y="481.5" width="1.15" height="1.15"/><rect x="204.3" y="481.4" width="1.15" height="1.15"/><rect x="472.5" y="482.6" width="1.15" height="1.15"/><rect x="208.2" y="481.9" width="1.15" height="1.15"/><rect x="296.6" y="483.6" width="1.15" height="1.15"/><rect x="147.7" y="481.5" width="1.15" height="1.15"/><rect x="439.0" y="483.4" width="1.15" height="1.15"/><rect x="439.5" y="481.8" width="1.15" height="1.15"/><rect x="287.5" y="482.7" width="1.15" height="1.15"/><rect x="204.5" y="482.3" width="1.15" height="1.15"/><rect x="66.9" y="484.1" width="1.15" height="1.15"/><rect x="71.5" y="483.4" width="1.15" height="1.15"/><rect x="377.4" y="482.7" width="1.15" height="1.15"/><rect x="370.1" y="482.1" width="1.15" height="1.15"/><rect x="408.7" y="481.6" width="1.15" height="1.15"/><rect x="133.8" y="483.1" width="1.15" height="1.15"/><rect x="358.2" y="480.3" width="1.15" height="1.15"/><rect x="313.9" y="482.3" width="1.15" height="1.15"/><rect x="198.6" y="483.8" width="1.15" height="1.15"/><rect x="73.8" y="483.2" width="1.15" height="1.15"/><rect x="431.3" y="482.8" width="1.15" height="1.15"/><rect x="54.7" y="480.5" width="1.15" height="1.15"/><rect x="243.1" y="481.3" width="1.15" height="1.15"/><rect x="352.9" y="482.8" width="1.15" height="1.15"/><rect x="50.3" y="482.9" width="1.15" height="1.15"/><rect x="105.6" y="484.6" width="1.15" height="1.15"/><rect x="109.0" y="483.9" width="1.15" height="1.15"/><rect x="388.3" y="482.6" width="1.15" height="1.15"/><rect x="71.7" y="482.0" width="1.15" height="1.15"/><rect x="393.2" y="481.5" width="1.15" height="1.15"/><rect x="265.9" y="481.4" width="1.15" height="1.15"/><rect x="168.2" y="482.7" width="1.15" height="1.15"/><rect x="55.0" y="482.5" width="1.15" height="1.15"/><rect x="434.6" y="482.0" width="1.15" height="1.15"/><rect x="126.5" y="484.3" width="1.15" height="1.15"/><rect x="278.0" y="481.7" width="1.15" height="1.15"/><rect x="255.5" y="483.8" width="1.15" height="1.15"/><rect x="116.5" y="481.7" width="1.15" height="1.15"/><rect x="345.9" y="483.9" width="1.15" height="1.15"/><rect x="230.5" y="484.5" width="1.15" height="1.15"/><rect x="316.1" y="482.0" width="1.15" height="1.15"/><rect x="76.7" y="482.1" width="1.15" height="1.15"/><rect x="205.1" y="480.7" width="1.15" height="1.15"/><rect x="332.3" y="480.6" width="1.15" height="1.15"/><rect x="226.2" y="483.7" width="1.15" height="1.15"/><rect x="429.9" y="483.6" width="1.15" height="1.15"/><rect x="247.8" y="482.7" width="1.15" height="1.15"/><rect x="68.0" y="483.5" width="1.15" height="1.15"/><rect x="318.5" y="480.7" width="1.15" height="1.15"/><rect x="212.1" y="480.8" width="1.15" height="1.15"/><rect x="142.8" y="482.0" width="1.15" height="1.15"/><rect x="268.1" y="482.6" width="1.15" height="1.15"/><rect x="422.5" y="484.5" width="1.15" height="1.15"/><rect x="89.5" y="482.8" width="1.15" height="1.15"/><rect x="322.1" y="481.9" width="1.15" height="1.15"/><rect x="273.4" y="483.0" width="1.15" height="1.15"/><rect x="133.5" y="483.4" width="1.15" height="1.15"/><rect x="219.6" y="481.6" width="1.15" height="1.15"/><rect x="118.5" y="483.5" width="1.15" height="1.15"/><rect x="98.2" y="482.8" width="1.15" height="1.15"/><rect x="330.5" y="482.1" width="1.15" height="1.15"/><rect x="293.7" y="486.0" width="1.15" height="1.15"/><rect x="316.3" y="483.4" width="1.15" height="1.15"/><rect x="416.6" y="484.5" width="1.15" height="1.15"/><rect x="168.1" y="482.1" width="1.15" height="1.15"/><rect x="143.1" y="483.0" width="1.15" height="1.15"/><rect x="311.6" y="482.9" width="1.15" height="1.15"/><rect x="264.8" y="483.0" width="1.15" height="1.15"/><rect x="330.9" y="482.5" width="1.15" height="1.15"/><rect x="104.7" y="482.6" width="1.15" height="1.15"/><rect x="364.8" y="484.1" width="1.15" height="1.15"/><rect x="260.1" y="486.0" width="1.15" height="1.15"/><rect x="152.9" y="482.0" width="1.15" height="1.15"/><rect x="169.0" y="484.7" width="1.15" height="1.15"/><rect x="444.0" y="481.3" width="1.15" height="1.15"/><rect x="74.4" y="482.8" width="1.15" height="1.15"/><rect x="368.2" y="480.1" width="1.15" height="1.15"/><rect x="327.8" y="483.5" width="1.15" height="1.15"/><rect x="169.6" y="483.3" width="1.15" height="1.15"/><rect x="285.3" y="466.9" width="1.15" height="1.15"/><rect x="382.1" y="467.5" width="1.15" height="1.15"/><rect x="401.6" y="469.4" width="1.15" height="1.15"/><rect x="116.9" y="467.5" width="1.15" height="1.15"/><rect x="271.0" y="467.5" width="1.15" height="1.15"/><rect x="357.7" y="465.8" width="1.15" height="1.15"/><rect x="157.3" y="466.6" width="1.15" height="1.15"/><rect x="179.3" y="465.5" width="1.15" height="1.15"/><rect x="124.8" y="467.4" width="1.15" height="1.15"/><rect x="130.7" y="466.1" width="1.15" height="1.15"/><rect x="377.5" y="466.0" width="1.15" height="1.15"/><rect x="175.1" y="467.0" width="1.15" height="1.15"/><rect x="96.1" y="467.2" width="1.15" height="1.15"/><rect x="406.2" y="466.7" width="1.15" height="1.15"/><rect x="530.5" y="467.3" width="1.15" height="1.15"/><rect x="117.1" y="466.0" width="1.15" height="1.15"/><rect x="139.6" y="467.6" width="1.15" height="1.15"/><rect x="329.7" y="466.5" width="1.15" height="1.15"/><rect x="136.8" y="466.7" width="1.15" height="1.15"/><rect x="87.1" y="466.2" width="1.15" height="1.15"/><rect x="348.0" y="466.8" width="1.15" height="1.15"/><rect x="147.7" y="467.6" width="1.15" height="1.15"/><rect x="409.2" y="466.8" width="1.15" height="1.15"/><rect x="291.1" y="466.5" width="1.15" height="1.15"/><rect x="229.0" y="465.9" width="1.15" height="1.15"/><rect x="50.3" y="468.0" width="1.15" height="1.15"/><rect x="267.8" y="468.2" width="1.15" height="1.15"/><rect x="206.2" y="468.1" width="1.15" height="1.15"/><rect x="236.0" y="469.0" width="1.15" height="1.15"/><rect x="301.1" y="467.7" width="1.15" height="1.15"/><rect x="312.9" y="467.7" width="1.15" height="1.15"/><rect x="137.9" y="466.7" width="1.15" height="1.15"/><rect x="62.8" y="466.7" width="1.15" height="1.15"/><rect x="56.7" y="466.2" width="1.15" height="1.15"/><rect x="332.2" y="466.7" width="1.15" height="1.15"/><rect x="70.3" y="466.4" width="1.15" height="1.15"/><rect x="291.3" y="466.8" width="1.15" height="1.15"/><rect x="248.0" y="467.5" width="1.15" height="1.15"/><rect x="120.6" y="466.9" width="1.15" height="1.15"/><rect x="239.7" y="466.2" width="1.15" height="1.15"/><rect x="166.5" y="464.0" width="1.15" height="1.15"/><rect x="74.4" y="468.1" width="1.15" height="1.15"/><rect x="170.9" y="466.2" width="1.15" height="1.15"/><rect x="309.7" y="466.1" width="1.15" height="1.15"/><rect x="261.5" y="467.5" width="1.15" height="1.15"/><rect x="484.1" y="467.0" width="1.15" height="1.15"/><rect x="364.3" y="466.5" width="1.15" height="1.15"/><rect x="354.3" y="466.1" width="1.15" height="1.15"/><rect x="304.5" y="467.8" width="1.15" height="1.15"/><rect x="198.6" y="466.6" width="1.15" height="1.15"/><rect x="107.3" y="468.2" width="1.15" height="1.15"/><rect x="180.3" y="466.5" width="1.15" height="1.15"/><rect x="311.2" y="467.3" width="1.15" height="1.15"/><rect x="192.7" y="467.3" width="1.15" height="1.15"/><rect x="190.1" y="468.1" width="1.15" height="1.15"/><rect x="329.1" y="467.6" width="1.15" height="1.15"/><rect x="147.2" y="465.6" width="1.15" height="1.15"/><rect x="350.1" y="467.2" width="1.15" height="1.15"/><rect x="201.1" y="467.1" width="1.15" height="1.15"/><rect x="236.9" y="468.2" width="1.15" height="1.15"/><rect x="53.9" y="467.4" width="1.15" height="1.15"/><rect x="322.4" y="466.3" width="1.15" height="1.15"/><rect x="193.7" y="467.1" width="1.15" height="1.15"/><rect x="78.6" y="467.2" width="1.15" height="1.15"/><rect x="264.9" y="467.5" width="1.15" height="1.15"/><rect x="124.2" y="467.4" width="1.15" height="1.15"/><rect x="221.8" y="465.3" width="1.15" height="1.15"/><rect x="422.5" y="465.5" width="1.15" height="1.15"/><rect x="498.9" y="467.0" width="1.15" height="1.15"/><rect x="425.5" y="466.8" width="1.15" height="1.15"/><rect x="330.0" y="467.4" width="1.15" height="1.15"/><rect x="347.4" y="464.7" width="1.15" height="1.15"/><rect x="271.0" y="466.7" width="1.15" height="1.15"/><rect x="240.6" y="466.0" width="1.15" height="1.15"/><rect x="237.6" y="467.4" width="1.15" height="1.15"/><rect x="294.3" y="464.8" width="1.15" height="1.15"/><rect x="138.8" y="467.8" width="1.15" height="1.15"/><rect x="334.7" y="468.0" width="1.15" height="1.15"/><rect x="53.3" y="465.7" width="1.15" height="1.15"/><rect x="303.1" y="466.4" width="1.15" height="1.15"/><rect x="385.8" y="466.0" width="1.15" height="1.15"/><rect x="381.5" y="468.1" width="1.15" height="1.15"/><rect x="96.8" y="465.8" width="1.15" height="1.15"/><rect x="265.0" y="467.7" width="1.15" height="1.15"/><rect x="132.2" y="468.9" width="1.15" height="1.15"/><rect x="300.7" y="466.6" width="1.15" height="1.15"/><rect x="125.1" y="465.6" width="1.15" height="1.15"/><rect x="140.7" y="466.8" width="1.15" height="1.15"/><rect x="361.8" y="465.3" width="1.15" height="1.15"/><rect x="199.2" y="467.9" width="1.15" height="1.15"/><rect x="49.9" y="467.7" width="1.15" height="1.15"/><rect x="377.4" y="465.7" width="1.15" height="1.15"/><rect x="293.4" y="466.7" width="1.15" height="1.15"/><rect x="331.2" y="468.5" width="1.15" height="1.15"/><rect x="107.9" y="466.9" width="1.15" height="1.15"/><rect x="97.4" y="466.4" width="1.15" height="1.15"/><rect x="78.6" y="467.0" width="1.15" height="1.15"/><rect x="400.7" y="465.9" width="1.15" height="1.15"/><rect x="131.5" y="468.8" width="1.15" height="1.15"/><rect x="335.1" y="468.3" width="1.15" height="1.15"/><rect x="269.8" y="469.1" width="1.15" height="1.15"/><rect x="264.7" y="467.7" width="1.15" height="1.15"/><rect x="170.9" y="468.9" width="1.15" height="1.15"/><rect x="167.8" y="466.0" width="1.15" height="1.15"/><rect x="402.2" y="466.1" width="1.15" height="1.15"/><rect x="286.8" y="469.0" width="1.15" height="1.15"/><rect x="168.0" y="466.5" width="1.15" height="1.15"/><rect x="324.8" y="467.4" width="1.15" height="1.15"/><rect x="311.1" y="466.6" width="1.15" height="1.15"/><rect x="221.2" y="467.1" width="1.15" height="1.15"/><rect x="142.3" y="466.9" width="1.15" height="1.15"/><rect x="375.5" y="467.2" width="1.15" height="1.15"/><rect x="124.9" y="467.6" width="1.15" height="1.15"/><rect x="459.7" y="467.4" width="1.15" height="1.15"/><rect x="222.0" y="464.9" width="1.15" height="1.15"/><rect x="296.9" y="468.8" width="1.15" height="1.15"/><rect x="271.2" y="466.7" width="1.15" height="1.15"/><rect x="229.4" y="466.1" width="1.15" height="1.15"/><rect x="347.8" y="467.3" width="1.15" height="1.15"/><rect x="300.9" y="466.5" width="1.15" height="1.15"/><rect x="181.3" y="465.7" width="1.15" height="1.15"/><rect x="327.9" y="468.0" width="1.15" height="1.15"/><rect x="240.2" y="467.8" width="1.15" height="1.15"/><rect x="206.3" y="468.8" width="1.15" height="1.15"/><rect x="101.7" y="466.1" width="1.15" height="1.15"/><rect x="194.4" y="467.9" width="1.15" height="1.15"/><rect x="201.5" y="468.1" width="1.15" height="1.15"/><rect x="187.2" y="468.1" width="1.15" height="1.15"/><rect x="113.2" y="468.5" width="1.15" height="1.15"/><rect x="375.2" y="467.2" width="1.15" height="1.15"/><rect x="251.4" y="466.6" width="1.15" height="1.15"/><rect x="358.0" y="466.1" width="1.15" height="1.15"/><rect x="67.9" y="467.3" width="1.15" height="1.15"/><rect x="197.4" y="467.5" width="1.15" height="1.15"/><rect x="67.3" y="466.5" width="1.15" height="1.15"/><rect x="401.3" y="466.4" width="1.15" height="1.15"/><rect x="262.4" y="466.9" width="1.15" height="1.15"/><rect x="189.2" y="466.9" width="1.15" height="1.15"/><rect x="71.3" y="468.4" width="1.15" height="1.15"/><rect x="417.5" y="468.2" width="1.15" height="1.15"/><rect x="390.5" y="466.9" width="1.15" height="1.15"/><rect x="186.6" y="464.8" width="1.15" height="1.15"/><rect x="357.7" y="468.5" width="1.15" height="1.15"/><rect x="259.2" y="467.5" width="1.15" height="1.15"/><rect x="505.6" y="466.9" width="1.15" height="1.15"/><rect x="176.8" y="466.6" width="1.15" height="1.15"/><rect x="316.2" y="467.9" width="1.15" height="1.15"/><rect x="250.9" y="467.3" width="1.15" height="1.15"/><rect x="201.1" y="466.5" width="1.15" height="1.15"/><rect x="165.3" y="465.3" width="1.15" height="1.15"/><rect x="302.1" y="467.8" width="1.15" height="1.15"/><rect x="118.0" y="466.5" width="1.15" height="1.15"/><rect x="318.3" y="467.7" width="1.15" height="1.15"/><rect x="343.2" y="468.3" width="1.15" height="1.15"/><rect x="104.4" y="466.4" width="1.15" height="1.15"/><rect x="77.7" y="467.5" width="1.15" height="1.15"/><rect x="145.2" y="466.4" width="1.15" height="1.15"/><rect x="208.0" y="467.1" width="1.15" height="1.15"/><rect x="226.9" y="467.0" width="1.15" height="1.15"/><rect x="89.4" y="467.0" width="1.15" height="1.15"/><rect x="101.6" y="466.2" width="1.15" height="1.15"/><rect x="315.7" y="467.2" width="1.15" height="1.15"/><rect x="369.7" y="466.9" width="1.15" height="1.15"/><rect x="61.6" y="467.5" width="1.15" height="1.15"/><rect x="139.6" y="468.3" width="1.15" height="1.15"/><rect x="131.1" y="464.8" width="1.15" height="1.15"/><rect x="209.1" y="467.3" width="1.15" height="1.15"/><rect x="229.7" y="466.0" width="1.15" height="1.15"/><rect x="166.0" y="465.5" width="1.15" height="1.15"/><rect x="291.7" y="466.3" width="1.15" height="1.15"/><rect x="125.6" y="466.5" width="1.15" height="1.15"/><rect x="387.2" y="466.7" width="1.15" height="1.15"/><rect x="92.2" y="466.2" width="1.15" height="1.15"/><rect x="404.4" y="467.2" width="1.15" height="1.15"/><rect x="187.6" y="465.8" width="1.15" height="1.15"/><rect x="215.0" y="466.8" width="1.15" height="1.15"/><rect x="193.8" y="466.0" width="1.15" height="1.15"/><rect x="144.3" y="466.5" width="1.15" height="1.15"/><rect x="207.6" y="469.3" width="1.15" height="1.15"/><rect x="447.9" y="466.5" width="1.15" height="1.15"/><rect x="194.4" y="468.1" width="1.15" height="1.15"/><rect x="367.1" y="466.5" width="1.15" height="1.15"/><rect x="61.7" y="466.4" width="1.15" height="1.15"/><rect x="90.0" y="465.8" width="1.15" height="1.15"/><rect x="231.4" y="465.7" width="1.15" height="1.15"/><rect x="326.5" y="467.6" width="1.15" height="1.15"/><rect x="104.3" y="468.0" width="1.15" height="1.15"/><rect x="173.0" y="466.0" width="1.15" height="1.15"/><rect x="309.7" y="465.5" width="1.15" height="1.15"/><rect x="159.7" y="467.0" width="1.15" height="1.15"/><rect x="103.7" y="466.5" width="1.15" height="1.15"/><rect x="249.2" y="466.7" width="1.15" height="1.15"/><rect x="319.4" y="466.9" width="1.15" height="1.15"/><rect x="241.2" y="466.4" width="1.15" height="1.15"/><rect x="430.6" y="467.0" width="1.15" height="1.15"/><rect x="55.5" y="468.0" width="1.15" height="1.15"/><rect x="153.1" y="466.6" width="1.15" height="1.15"/><rect x="130.8" y="465.8" width="1.15" height="1.15"/><rect x="216.3" y="466.0" width="1.15" height="1.15"/><rect x="108.5" y="465.0" width="1.15" height="1.15"/><rect x="403.8" y="466.5" width="1.15" height="1.15"/><rect x="380.9" y="466.6" width="1.15" height="1.15"/><rect x="143.2" y="467.7" width="1.15" height="1.15"/><rect x="104.0" y="465.7" width="1.15" height="1.15"/><rect x="139.3" y="466.5" width="1.15" height="1.15"/><rect x="235.7" y="468.5" width="1.15" height="1.15"/><rect x="515.7" y="466.6" width="1.15" height="1.15"/><rect x="442.6" y="467.4" width="1.15" height="1.15"/><rect x="383.0" y="466.3" width="1.15" height="1.15"/><rect x="85.4" y="467.0" width="1.15" height="1.15"/><rect x="338.5" y="467.4" width="1.15" height="1.15"/><rect x="278.6" y="467.8" width="1.15" height="1.15"/><rect x="239.2" y="468.3" width="1.15" height="1.15"/><rect x="212.6" y="467.0" width="1.15" height="1.15"/><rect x="70.4" y="466.5" width="1.15" height="1.15"/><rect x="182.8" y="466.1" width="1.15" height="1.15"/><rect x="177.2" y="464.2" width="1.15" height="1.15"/><rect x="537.1" y="466.4" width="1.15" height="1.15"/><rect x="324.4" y="468.2" width="1.15" height="1.15"/><rect x="226.9" y="465.5" width="1.15" height="1.15"/><rect x="197.9" y="466.8" width="1.15" height="1.15"/><rect x="361.2" y="465.6" width="1.15" height="1.15"/><rect x="319.5" y="467.8" width="1.15" height="1.15"/><rect x="285.4" y="467.3" width="1.15" height="1.15"/><rect x="168.0" y="466.6" width="1.15" height="1.15"/><rect x="271.4" y="467.4" width="1.15" height="1.15"/><rect x="328.4" y="467.1" width="1.15" height="1.15"/><rect x="196.6" y="467.3" width="1.15" height="1.15"/><rect x="406.2" y="467.8" width="1.15" height="1.15"/><rect x="87.5" y="466.5" width="1.15" height="1.15"/><rect x="224.0" y="464.9" width="1.15" height="1.15"/><rect x="81.4" y="467.9" width="1.15" height="1.15"/><rect x="175.0" y="467.3" width="1.15" height="1.15"/><rect x="395.3" y="467.6" width="1.15" height="1.15"/><rect x="245.0" y="465.1" width="1.15" height="1.15"/><rect x="367.5" y="465.6" width="1.15" height="1.15"/><rect x="344.3" y="467.7" width="1.15" height="1.15"/><rect x="216.2" y="464.8" width="1.15" height="1.15"/><rect x="140.8" y="468.0" width="1.15" height="1.15"/><rect x="209.1" y="465.8" width="1.15" height="1.15"/><rect x="367.9" y="466.5" width="1.15" height="1.15"/><rect x="76.3" y="466.0" width="1.15" height="1.15"/><rect x="70.4" y="466.2" width="1.15" height="1.15"/><rect x="342.7" y="468.0" width="1.15" height="1.15"/><rect x="276.4" y="468.2" width="1.15" height="1.15"/><rect x="534.8" y="466.3" width="1.15" height="1.15"/><rect x="210.3" y="467.2" width="1.15" height="1.15"/><rect x="426.2" y="467.4" width="1.15" height="1.15"/><rect x="313.6" y="465.4" width="1.15" height="1.15"/><rect x="344.6" y="466.4" width="1.15" height="1.15"/><rect x="413.4" y="466.5" width="1.15" height="1.15"/><rect x="271.4" y="465.1" width="1.15" height="1.15"/><rect x="113.0" y="465.3" width="1.15" height="1.15"/><rect x="421.0" y="467.1" width="1.15" height="1.15"/><rect x="61.8" y="468.1" width="1.15" height="1.15"/><rect x="321.7" y="467.4" width="1.15" height="1.15"/><rect x="121.6" y="466.7" width="1.15" height="1.15"/><rect x="127.9" y="464.4" width="1.15" height="1.15"/><rect x="361.6" y="467.3" width="1.15" height="1.15"/><rect x="101.1" y="465.7" width="1.15" height="1.15"/><rect x="80.3" y="465.1" width="1.15" height="1.15"/><rect x="77.6" y="468.2" width="1.15" height="1.15"/><rect x="158.5" y="466.8" width="1.15" height="1.15"/><rect x="162.1" y="468.1" width="1.15" height="1.15"/><rect x="154.8" y="468.1" width="1.15" height="1.15"/><rect x="187.3" y="468.7" width="1.15" height="1.15"/><rect x="127.7" y="465.9" width="1.15" height="1.15"/><rect x="225.7" y="466.2" width="1.15" height="1.15"/><rect x="194.7" y="469.2" width="1.15" height="1.15"/><rect x="122.3" y="468.8" width="1.15" height="1.15"/><rect x="96.1" y="466.7" width="1.15" height="1.15"/><rect x="531.0" y="466.5" width="1.15" height="1.15"/><rect x="163.7" y="466.8" width="1.15" height="1.15"/><rect x="296.9" y="466.6" width="1.15" height="1.15"/><rect x="260.2" y="470.2" width="1.15" height="1.15"/><rect x="107.4" y="467.3" width="1.15" height="1.15"/><rect x="115.0" y="467.6" width="1.15" height="1.15"/><rect x="120.9" y="468.4" width="1.15" height="1.15"/><rect x="294.9" y="466.1" width="1.15" height="1.15"/><rect x="182.6" y="467.9" width="1.15" height="1.15"/><rect x="178.5" y="468.2" width="1.15" height="1.15"/><rect x="249.2" y="467.3" width="1.15" height="1.15"/><rect x="226.8" y="466.3" width="1.15" height="1.15"/><rect x="316.2" y="465.4" width="1.15" height="1.15"/><rect x="244.8" y="464.3" width="1.15" height="1.15"/><rect x="238.8" y="468.3" width="1.15" height="1.15"/><rect x="250.1" y="467.0" width="1.15" height="1.15"/><rect x="173.6" y="466.9" width="1.15" height="1.15"/><rect x="233.8" y="467.1" width="1.15" height="1.15"/><rect x="70.0" y="446.0" width="1.15" height="1.15"/><rect x="66.0" y="452.0" width="1.15" height="1.15"/><rect x="75.0" y="452.0" width="1.15" height="1.15"/><rect x="86.0" y="452.0" width="1.15" height="1.15"/><rect x="92.0" y="452.0" width="1.15" height="1.15"/><rect x="122.0" y="452.0" width="1.15" height="1.15"/><rect x="132.0" y="452.0" width="1.15" height="1.15"/><rect x="145.0" y="446.0" width="1.15" height="1.15"/><rect x="147.0" y="452.0" width="1.15" height="1.15"/><rect x="168.0" y="453.0" width="1.15" height="1.15"/><rect x="182.8" y="452.0" width="1.15" height="1.15"/><rect x="201.2" y="452.0" width="1.15" height="1.15"/><rect x="240.0" y="452.0" width="1.15" height="1.15"/><rect x="262.0" y="452.0" width="1.15" height="1.15"/><rect x="307.0" y="452.0" width="1.15" height="1.15"/><rect x="342.0" y="452.0" width="1.15" height="1.15"/><rect x="386.0" y="452.0" width="1.15" height="1.15"/><rect x="392.0" y="452.0" width="1.15" height="1.15"/><rect x="231.0" y="507.0" width="1.15" height="1.15"/><rect x="252.0" y="507.0" width="1.15" height="1.15"/><rect x="266.0" y="507.0" width="1.15" height="1.15"/><rect x="120.0" y="523.0" width="1.15" height="1.15"/><rect x="184.0" y="523.0" width="1.15" height="1.15"/><rect x="205.0" y="523.0" width="1.15" height="1.15"/><rect x="221.0" y="523.0" width="1.15" height="1.15"/><rect x="295.0" y="519.0" width="1.15" height="1.15"/><rect x="490.0" y="524.0" width="1.15" height="1.15"/><rect x="82.0" y="540.0" width="1.15" height="1.15"/><rect x="247.0" y="540.0" width="1.15" height="1.15"/><rect x="262.0" y="540.0" width="1.15" height="1.15"/><rect x="265.0" y="540.0" width="1.15" height="1.15"/><rect x="320.0" y="539.0" width="1.15" height="1.15"/><rect x="549.0" y="539.0" width="1.15" height="1.15"/><rect x="68.0" y="462.0" width="1.15" height="1.15"/><rect x="98.0" y="474.0" width="1.15" height="1.15"/><rect x="322.5" y="524.0" width="1.15" height="1.15"/></g><path d="M47.1 202.500L47.400 262L47.700 290" fill="none" stroke="#2a86b8" stroke-width="1" opacity=".85"/><polyline points="47.7,290.0 50.2,328.0 52.0,364.0 54.0,382.0 56.6,400.0 60.4,370.5 63.5,397.0 66.3,368.7 70.7,389.6 74.5,405.0 77.0,384.5 82.2,374.3 86.5,360.8 89.8,417.7 91.9,376.9 94.4,378.0 96.7,371.0 100.0,391.0 102.6,375.6 104.4,379.4 107.2,426.7 109.5,378.0 112.3,384.5 114.9,407.5 117.9,388.4 120.5,385.8 123.0,368.0 125.6,379.4 127.6,370.5 132.0,397.3 135.3,376.9 137.9,393.5 140.9,389.6 143.5,378.0 146.0,412.6 148.6,376.9 151.1,379.4 154.2,376.9 158.0,360.3 160.6,389.6 163.1,371.8 165.7,408.8 168.5,407.5 171.6,376.9 172.6,375.6 176.4,364.0 178.9,392.0 181.5,452.0 184.0,384.5 186.6,377.0 189.2,401.0 191.7,379.4 194.3,380.7 196.8,415.0 199.4,383.0 201.2,407.5 204.5,384.5 207.0,385.8 209.1,382.0 212.2,400.0 214.7,402.4 217.8,424.0 219.8,387.0 222.9,378.0 224.9,388.4 227.5,389.6 230.0,373.0 232.6,375.6 237.7,398.6 242.8,362.8 245.9,388.4 247.9,391.0 250.5,405.0 254.3,388.4 257.6,401.0 260.7,398.6 265.8,360.3 268.9,415.0 270.4,361.5 273.5,365.4 275.5,382.0 278.6,393.5 281.1,380.7 283.2,385.8 286.2,366.6 288.8,370.5 291.9,411.4 293.4,370.5 296.5,411.4 299.0,383.0 300.3,387.0 302.6,366.6 305.6,373.0 307.7,373.0 311.5,401.0 314.0,394.8 316.6,368.0 319.7,387.0 321.2,371.8 324.8,414.0 326.8,369.2 329.4,387.0 331.9,366.6 334.5,341.0 338.3,341.0 343.9,350.0 347.3,323.2 349.3,337.3 351.1,330.9 356.7,338.5 361.3,332.2 366.9,351.3 370.3,347.5 372.8,336.0 375.4,361.5 379.2,346.2 384.3,353.9 388.1,318.1 390.7,347.5 393.3,348.8 397.9,325.8 400.9,341.0 403.5,338.5 407.3,339.8 410.4,339.8 413.2,320.7 416.3,348.8 418.3,352.6 423.4,327.0 427.0,347.5 430.3,350.0 433.8,351.3 436.9,347.5 439.5,334.7 442.0,347.5 445.3,343.7 449.2,350.0 451.7,342.4 455.5,348.8 458.9,342.4 461.9,353.9 464.5,327.0 467.6,338.5 470.9,344.9 473.9,347.5 476.8,337.3 479.8,356.4 483.7,343.7 488.3,332.2 492.1,336.0 495.2,334.7 497.7,342.4 500.8,356.4 502.8,337.3 504.9,353.9 509.2,352.6 511.8,344.9 518.1,316.8 520.7,353.9 523.3,337.3 527.1,337.3 530.9,344.9 533.5,332.2 538.1,350.0 541.1,341.0 544.2,366.6 546.8,408.8 548.3,379.4 551.4,364.0 553.4,397.3 554.7,440.7" fill="none" stroke="#3a9fd8" stroke-width="1.0" stroke-linejoin="round" shape-rendering="crispEdges"/></svg>

<!-- watermark -->
<div class="a" style="left:535px;top:630px;width:170px;height:35px;background:rgba(62,62,62,0.93)"></div>

<div id="txt" style="position:absolute;left:0;top:0;width:705px;height:665px;will-change:transform">
<span id="title" class="t" style="left:29.70px;top:9.30px;font:400 12px 'Liberation Sans', sans-serif;color:#000;letter-spacing:-0.197px">HD Tune Pro 5.75 - Hard Disk/SSD Utility</span>
<span id="mfile" class="t" style="left:7.20px;top:34.10px;font:400 12px 'Liberation Sans', sans-serif;color:#000;letter-spacing:0.067px">File</span>
<span id="mhelp" class="t" style="left:43.20px;top:34.10px;font:400 12px 'Liberation Sans', sans-serif;color:#000;letter-spacing:0.467px">Help</span>
<span id="combo" class="t" style="left:39.00px;top:64.00px;font:400 11px 'Liberation Sans', sans-serif;color:#000;letter-spacing:-0.235px">OSC PSSD (1024 gB)</span>
<span id="degc" class="t" style="left:413.60px;top:63.90px;font:700 12px 'Liberation Sans', sans-serif;color:#000;letter-spacing:0.900px">°C</span>
<span id="exit" class="t" style="left:656.70px;top:64.30px;font:400 11px 'Liberation Sans', sans-serif;color:#000;letter-spacing:-0.433px">Exit</span>
<span id="t1" class="t" style="left:64.80px;top:104.00px;font:400 11px 'Liberation Sans', sans-serif;color:#000;letter-spacing:-0.292px">File Benchmark</span>
<span id="t2" class="t" style="left:217.80px;top:104.00px;font:400 11px 'Liberation Sans', sans-serif;color:#000;letter-spacing:-0.255px">Disk monitor</span>
<span id="t3" class="t" style="left:356.80px;top:104.00px;font:400 11px 'Liberation Sans', sans-serif;color:#000;letter-spacing:-0.550px">AAM</span>
<span id="t4" class="t" style="left:458.40px;top:104.00px;font:400 11px 'Liberation Sans', sans-serif;color:#000;letter-spacing:-0.183px">Random Access</span>
<span id="t5" class="t" style="left:615.50px;top:104.00px;font:400 11px 'Liberation Sans', sans-serif;color:#000;letter-spacing:-0.400px">Extra tests</span>
<span id="b1" class="t" style="left:60.80px;top:122.00px;font:400 11px 'Liberation Sans', sans-serif;color:#000;letter-spacing:-0.350px">Benchmark</span>
<span id="b2" class="t" style="left:187.80px;top:124.00px;font:400 11px 'Liberation Sans', sans-serif;color:#000;letter-spacing:-0.133px">Info</span>
<span id="b3" class="t" style="left:278.80px;top:124.00px;font:400 11px 'Liberation Sans', sans-serif;color:#000;letter-spacing:-0.160px">Health</span>
<span id="b4" class="t" style="left:383.10px;top:124.00px;font:400 11px 'Liberation Sans', sans-serif;color:#000;letter-spacing:-0.311px">Error Scan</span>
<span id="b5" class="t" style="left:505.30px;top:124.00px;font:400 11px 'Liberation Sans', sans-serif;color:#000;letter-spacing:-0.382px">Folder Usage</span>
<span id="b6" class="t" style="left:640.40px;top:124.00px;font:400 11px 'Liberation Sans', sans-serif;color:#000;letter-spacing:-0.600px">Erase</span>
<span id="start" class="t" style="left:621.40px;top:156.50px;font:400 11px 'Liberation Sans', sans-serif;color:#000;letter-spacing:-0.325px">Start</span>
<span id="read" class="t" style="left:608.80px;top:189.50px;font:400 11px 'Liberation Sans', sans-serif;color:#000;letter-spacing:-0.233px">Read</span>
<span id="write" class="t" style="left:609.80px;top:205.60px;font:400 11px 'Liberation Sans', sans-serif;color:#000;letter-spacing:-0.400px">Write</span>
<span id="ss" class="t" style="left:608.80px;top:230.50px;font:400 11px 'Liberation Sans', sans-serif;color:#000;letter-spacing:-0.245px">Short stroke</span>
<span id="five" class="t" style="left:595.80px;top:253.70px;font:400 11px 'Liberation Sans', sans-serif;color:#000;letter-spacing:0.000px">5</span>
<span id="gb" class="t" style="left:666.00px;top:253.40px;font:400 11px 'Liberation Sans', sans-serif;color:#000;letter-spacing:-1.000px">gB</span>
<span id="tr" class="t" style="left:609.80px;top:279.50px;font:400 11px 'Liberation Sans', sans-serif;color:#000;letter-spacing:-0.283px">Transfer rate</span>
<span id="min" class="t" style="left:592.50px;top:298.00px;font:400 11px 'Liberation Sans', sans-serif;color:#000;letter-spacing:-0.550px">Minimum</span>
<span id="max" class="t" style="left:592.50px;top:331.00px;font:400 11px 'Liberation Sans', sans-serif;color:#000;letter-spacing:-0.533px">Maximum</span>
<span id="avg" class="t" style="left:593.50px;top:361.00px;font:400 11px 'Liberation Sans', sans-serif;color:#000;letter-spacing:-0.367px">Average</span>
<span id="at" class="t" style="left:609.80px;top:404.50px;font:400 11px 'Liberation Sans', sans-serif;color:#000;letter-spacing:-0.370px">Access time</span>
<span id="br" class="t" style="left:608.80px;top:438.50px;font:400 11px 'Liberation Sans', sans-serif;color:#000;letter-spacing:-0.311px">Burst rate</span>
<span id="cpu" class="t" style="left:592.00px;top:472.50px;font:400 11px 'Liberation Sans', sans-serif;color:#000;letter-spacing:-0.225px">CPU usage</span>
<span id="np" class="t" style="left:592.50px;top:516.00px;font:400 11px 'Liberation Sans', sans-serif;color:#000;letter-spacing:-0.273px">Number of passes</span>
<span id="three" class="t" style="left:595.80px;top:532.50px;font:400 11px 'Liberation Sans', sans-serif;color:#000;letter-spacing:0.000px">3</span>
<span id="p33" class="t" style="left:650.50px;top:557.50px;font:400 12px 'Liberation Sans', sans-serif;color:#000;letter-spacing:0.750px">3/3</span>
<span id="vmin" class="t" style="left:607.00px;top:313.50px;font:700 11.5px 'Liberation Sans', sans-serif;color:#38a0e6;letter-spacing:0.667px">774.5 MB/s</span>
<span id="vmax" class="t" style="left:603.40px;top:346.00px;font:700 11.5px 'Liberation Sans', sans-serif;color:#38a0e6;letter-spacing:0.620px">1858.2 MB/s</span>
<span id="vavg" class="t" style="left:603.40px;top:377.00px;font:700 11.5px 'Liberation Sans', sans-serif;color:#38a0e6;letter-spacing:0.720px">1147.1 MB/s</span>
<span id="vat" class="t" style="left:614.30px;top:421.00px;font:700 11.5px 'Liberation Sans', sans-serif;color:#f0f050;letter-spacing:0.357px">0.133 ms</span>
<span id="vbr" class="t" style="left:607.00px;top:455.00px;font:700 11.5px 'Liberation Sans', sans-serif;color:#fff;letter-spacing:0.667px">776.4 MB/s</span>
<span id="vcpu" class="t" style="left:626.00px;top:488.00px;font:700 11.5px 'Liberation Sans', sans-serif;color:#fff;letter-spacing:0.467px">4.7%</span>
<span id="mbs" class="t" style="left:45.60px;top:157.50px;font:400 11px 'Liberation Sans', sans-serif;color:#000;letter-spacing:-0.100px">MB/s</span>
<span id="ms" class="t" style="left:540.00px;top:158.00px;font:400 11px 'Liberation Sans', sans-serif;color:#000;letter-spacing:-1.000px">ms</span>
<span id="y2000" class="t" style="left:17.60px;top:164.60px;font:400 11px 'Liberation Sans', sans-serif;color:#000;letter-spacing:-0.333px">2000</span>
<span id="y1500" class="t" style="left:16.60px;top:279.30px;font:400 11px 'Liberation Sans', sans-serif;color:#000;letter-spacing:0.000px">1500</span>
<span id="y1000" class="t" style="left:16.60px;top:393.80px;font:400 11px 'Liberation Sans', sans-serif;color:#000;letter-spacing:0.000px">1000</span>
<span id="y500" class="t" style="left:22.40px;top:509.00px;font:400 11px 'Liberation Sans', sans-serif;color:#000;letter-spacing:0.100px">500</span>
<span id="r40" class="t" style="left:559.90px;top:164.60px;font:400 11px 'Liberation Sans', sans-serif;color:#000;letter-spacing:-0.467px">0.40</span>
<span id="r30" class="t" style="left:559.90px;top:279.30px;font:400 11px 'Liberation Sans', sans-serif;color:#000;letter-spacing:-0.467px">0.30</span>
<span id="r20" class="t" style="left:559.90px;top:393.80px;font:400 11px 'Liberation Sans', sans-serif;color:#000;letter-spacing:-0.467px">0.20</span>
<span id="r10" class="t" style="left:559.90px;top:509.00px;font:400 11px 'Liberation Sans', sans-serif;color:#000;letter-spacing:-0.467px">0.10</span>
<span id="x0" class="t" style="left:43.80px;top:635.20px;font:400 11px 'Liberation Sans', sans-serif;color:#000;letter-spacing:0.000px">0</span>
<span id="x5000" class="t" style="left:533.90px;top:635.00px;font:400 11px 'Liberation Sans', sans-serif;color:#000;letter-spacing:-0.520px">5000mB</span>
<span id="wm" class="t" style="left:540.00px;top:641.80px;font:400 15px 'Liberation Mono', monospace;color:#8ed6b8;-webkit-text-stroke:0.15px #8ed6b8;letter-spacing:0.035px">www.ssd-tester.com</span>
<span id="x500" class="t" style="left:88.10px;top:635.20px;font:400 11px 'Liberation Sans', sans-serif;color:#000;letter-spacing:-0.700px">500</span>
<span id="x1000" class="t" style="left:135.60px;top:635.20px;font:400 11px 'Liberation Sans', sans-serif;color:#000;letter-spacing:-0.400px">1000</span>
<span id="x1500" class="t" style="left:186.40px;top:635.20px;font:400 11px 'Liberation Sans', sans-serif;color:#000;letter-spacing:-0.400px">1500</span>
<span id="x2000" class="t" style="left:238.20px;top:635.20px;font:400 11px 'Liberation Sans', sans-serif;color:#000;letter-spacing:-0.733px">2000</span>
<span id="x2500" class="t" style="left:289.00px;top:635.20px;font:400 11px 'Liberation Sans', sans-serif;color:#000;letter-spacing:-0.733px">2500</span>
<span id="x3000" class="t" style="left:338.80px;top:635.20px;font:400 11px 'Liberation Sans', sans-serif;color:#000;letter-spacing:-0.400px">3000</span>
<span id="x3500" class="t" style="left:389.60px;top:635.20px;font:400 11px 'Liberation Sans', sans-serif;color:#000;letter-spacing:-0.400px">3500</span>
<span id="x4000" class="t" style="left:441.40px;top:635.20px;font:400 11px 'Liberation Sans', sans-serif;color:#000;letter-spacing:-0.733px">4000</span>
<span id="x4500" class="t" style="left:492.20px;top:635.20px;font:400 11px 'Liberation Sans', sans-serif;color:#000;letter-spacing:-0.733px">4500</span>
</div>
<div id="dash" class="a" style="left:402.5px;top:70.300px;width:8.300px;height:1.400px;background:#000"></div>
<!-- menu underlines -->
<div class="a" style="left:8px;top:46px;width:6.500px;height:1px;background:#000"></div>
<div class="a" style="left:44px;top:46px;width:8px;height:1px;background:#000"></div>

<div class="a" style="left:1px;top:662px;width:703px;height:2px;background:#fafafa"></div>
<div id="lwhite" class="a" style="left:1px;top:96px;width:1px;height:568px;background:#fafafa"></div>
<!-- window border -->
<div class="a" style="left:0;top:0;width:705px;height:665px;border:1px solid #6b6b6b;pointer-events:none"></div>
</div></body></html>
